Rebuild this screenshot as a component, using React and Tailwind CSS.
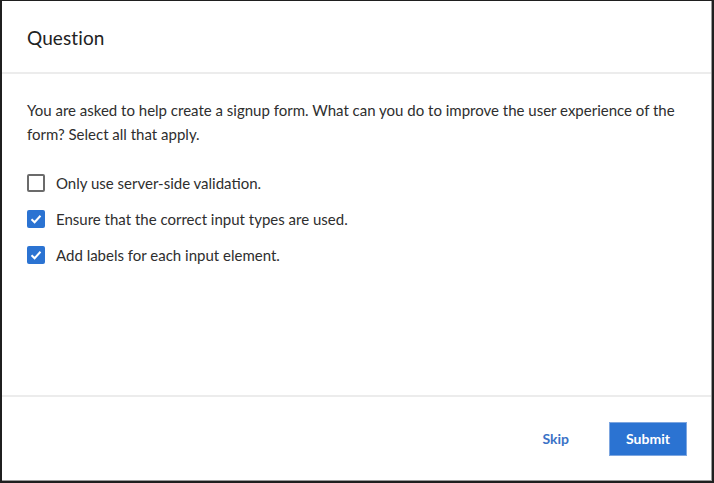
import React, { useState } from "react";

const options = [
  { id: "a", label: "Only use server-side validation.", checked: false },
  { id: "b", label: "Ensure that the correct input types are used.", checked: true },
  { id: "c", label: "Add labels for each input element.", checked: true },
];

function Checkbox({ checked, onChange }) {
  return (
    <button
      type="button"
      onClick={onChange}
      className={
        checked
          ? "w-[18px] h-[18px] rounded-[2px] bg-[#2b73d2] flex items-center justify-center shrink-0"
          : "w-[18px] h-[18px] rounded-[2px] border-2 border-[#6b6b6b] bg-white shrink-0"
      }
    >
      {checked && (
        <svg width="14" height="14" viewBox="0 0 14 14" fill="none">
          <path d="M2.5 7.2 L5.6 10.2 L11.5 3.8" stroke="#fff" strokeWidth="2" />
        </svg>
      )}
    </button>
  );
}

export default function App() {
  const [answers, setAnswers] = useState(options);

  const toggle = (id) =>
    setAnswers((prev) =>
      prev.map((o) => (o.id === id ? { ...o, checked: !o.checked } : o))
    );

  return (
    <div
      className="h-screen w-full bg-[#1f1f1f] pl-[2px] pt-[1px] pr-[2px] pb-[2px]"
      style={{ fontFamily: "Lato, 'Noto Sans', sans-serif" }}
    >
      <div className="h-full bg-white border border-[#9a9a9a] border-l-0 border-t-0 flex flex-col">
        {/* header */}
        <div className="h-[73px] flex items-center px-[25px] pt-[3px] border-b-2 border-[#ececec] shrink-0">
          <h1 className="text-[19px] text-[#222] tracking-[0.1px]">Question</h1>
        </div>

        {/* body */}
        <div className="flex-1 px-[25px] pt-[24px]">
          <p className="text-[15px] leading-[24px] text-[#2e2e2e]">
            You are asked to help create a signup form. What can you do to improve the user experience of the
            form? Select all that apply.
          </p>
          <div className="mt-[19px] flex flex-col">
            {answers.map((o) => (
              <label key={o.id} className="h-[36px] flex items-center gap-[11px] cursor-pointer">
                <Checkbox checked={o.checked} onChange={() => toggle(o.id)} />
                <span className="text-[15px] text-[#2e2e2e]">{o.label}</span>
              </label>
            ))}
          </div>
        </div>

        {/* footer */}
        <div className="h-[85px] border-t-2 border-[#ececec] flex items-center justify-end pr-[24px] gap-[40px] shrink-0">
          <button className="text-[14px] font-bold text-[#3a72c6]">Skip</button>
          <button className="w-[78px] h-[34px] bg-[#2b73d2] border border-[#7da6e0] text-white text-[14px] font-bold">
            Submit
          </button>
        </div>
      </div>
    </div>
  );
}
